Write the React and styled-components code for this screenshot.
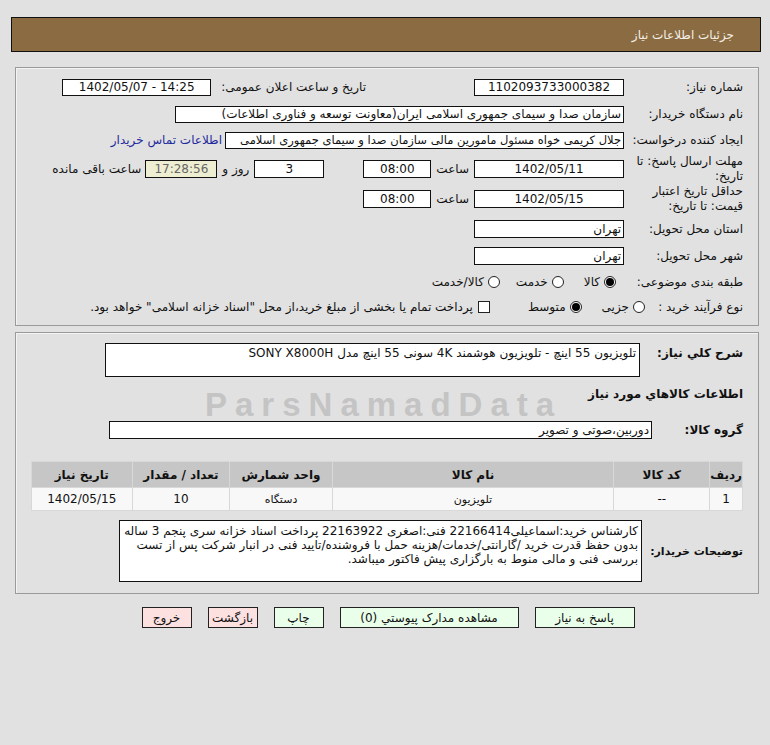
import React from 'react'
import styled, { createGlobalStyle } from 'styled-components'

const GlobalStyle = createGlobalStyle`
  html, body {
    margin: 0;
    padding: 0;
    background: #e1e1e1;
  }
  body {
    font-family: "DejaVu Sans", Tahoma, sans-serif;
    font-size: 11px;
    color: #111;
  }
`

const Page = styled.div`
  direction: rtl;
  width: 750px;
  padding: 17px 0 0 11px;
`

const Header = styled.div`
  height: 33px;
  background: #8b6c42;
  border: 1px solid #111;
  color: #f4efe6;
  font-size: 12px;
  display: flex;
  align-items: center;
  padding-right: 26px;
`

const Body = styled.div`
  position: relative;
  margin: 15px 2px 0 4px;
`

const Watermark = styled.div`
  position: absolute;
  left: 190px;
  top: 319px;
  font-family: "Liberation Sans", Arial, sans-serif;
  font-weight: bold;
  font-size: 33px;
  letter-spacing: 8px;
  color: #c4c4c4;
  white-space: nowrap;
  direction: ltr;
  pointer-events: none;
  z-index: 0;
`

const Panel = styled.div`
  position: relative;
  z-index: 1;
  border: 1px solid #9a9a9a;
  box-shadow: inset 1px 1px 0 #f4f4f4;
  padding: ${p => p.$pad};
  margin-bottom: ${p => p.$mb || 0}px;
  display: flex;
  flex-direction: column;
`

const Row = styled.div`
  display: flex;
  align-items: ${p => p.$top ? 'flex-start' : 'center'};
  height: ${p => p.$h}px;
  margin-top: ${p => p.$mt || 0}px;
`

const Label = styled.div`
  width: ${p => p.$w}px;
  flex-shrink: 0;
  font-size: ${p => p.$fs || 12}px;
  line-height: 15px;
  font-weight: ${p => p.$bold ? 'bold' : 'normal'};
  padding-top: ${p => p.$pt || 0}px;
  white-space: ${p => p.$nowrap ? 'nowrap' : 'normal'};
`

const Text = styled.span`
  white-space: nowrap;
  font-size: 12px;
  margin: 0 ${p => p.$mx || 4}px;
`

const Field = styled.div`
  width: ${p => p.$w}px;
  height: ${p => p.$h || 17}px;
  flex-shrink: 0;
  box-sizing: border-box;
  border: 1px solid #111;
  background: ${p => p.$bg || '#fff'};
  color: ${p => p.$color || '#111'};
  font-size: ${p => p.$fs || 12}px;
  line-height: ${p => (p.$h || 17) - 2}px;
  text-align: ${p => p.$align || 'center'};
  direction: ${p => p.$ltr ? 'ltr' : 'rtl'};
  padding: 0 2px;
  overflow: hidden;
  white-space: nowrap;
`

const Area = styled.div`
  width: ${p => p.$w}px;
  height: ${p => p.$h}px;
  box-sizing: border-box;
  border: 1px solid #111;
  background: #fff;
  font-size: 12px;
  line-height: 14px;
  padding: ${p => p.$pad || '2px 3px'};
`

const Link = styled.a`
  color: #1f2a9e;
  text-decoration: none;
  font-size: 12px;
  white-space: nowrap;
  margin-right: 3px;
`

const Spacer = styled.div`
  width: ${p => p.$w}px;
  flex-shrink: 0;
`

const Option = styled.label`
  display: flex;
  align-items: center;
  font-size: 12px;
  margin-left: ${p => p.$ml || 0}px;
  white-space: nowrap;
`

const Radio = styled.span`
  width: 12px;
  height: 12px;
  box-sizing: border-box;
  border-radius: 50%;
  border: 1px solid #222;
  background: #fff;
  margin-left: 4px;
  display: flex;
  align-items: center;
  justify-content: center;
  &::after {
    content: '';
    width: 8px;
    height: 8px;
    border-radius: 50%;
    background: ${p => p.$on ? '#000' : 'transparent'};
  }
`

const Check = styled.span`
  width: 12px;
  height: 12px;
  box-sizing: border-box;
  border: 1px solid #222;
  background: #fff;
  margin-left: 5px;
`

const Section = styled.div`
  font-size: 12px;
  font-weight: bold;
  margin-top: ${p => p.$mt}px;
  height: 16px;
`

const Table = styled.table`
  width: 712px;
  margin: 22px 0 0 0;
  border-collapse: collapse;
  font-size: 12px;
  align-self: flex-start;
`

const Th = styled.th`
  width: ${p => p.$w}px;
  height: 25px;
  background: #c6c6c6;
  border: 1px solid #d8d8d8;
  font-weight: bold;
  text-align: center;
  padding: 0;
`

const Td = styled.td`
  height: 22px;
  background: #f8f8f8;
  border: 1px solid #d8d8d8;
  text-align: center;
  padding: 0;
  font-size: ${p => p.$fs || 12}px;
`

const Buttons = styled.div`
  display: flex;
  justify-content: center;
  gap: 16px;
  margin-top: 13px;
  padding-left: 4px;
`

const Button = styled.button`
  width: ${p => p.$w}px;
  height: 21px;
  border: 1px solid #222;
  background: ${p => p.$danger ? '#fde0e0' : '#eaffea'};
  font-family: "DejaVu Sans", Tahoma, sans-serif;
  font-size: 12px;
  color: #111;
  padding: 0;
  cursor: pointer;
`

export default function App() {
  return (
    <>
      <GlobalStyle />
      <Page>
        <Header>جزئیات اطلاعات نیاز</Header>
        <Body>
          <Watermark>ParsNamadData</Watermark>

          <Panel $pad="9px 15px 8px 0" $mb={6}>
            <Row $h={20}>
              <Label $w={119}>شماره نیاز:</Label>
              <Field $w={150}>1102093733000382</Field>
              <Spacer $w={104} />
              <Text $mx={0}>تاریخ و ساعت اعلان عمومی:</Text>
              <Spacer $w={6} />
              <Field $w={149} $ltr>1402/05/07 - 14:25</Field>
            </Row>
            <Row $h={20} $mt={7}>
              <Label $w={119}>نام دستگاه خریدار:</Label>
              <Field $w={449} $align="right">سازمان صدا و سیمای جمهوری اسلامی ایران(معاونت توسعه و فناوری اطلاعات)</Field>
            </Row>
            <Row $h={20} $mt={6}>
              <Label $w={119}>ایجاد کننده درخواست:</Label>
              <Field $w={399} $align="right" $fs={11.5}>جلال کریمی خواه مسئول مامورین مالی  سازمان صدا و سیمای جمهوری اسلامی</Field>
              <Link href="#">اطلاعات تماس خریدار</Link>
            </Row>
            <Row $h={30} $mt={4}>
              <Label $w={119}>مهلت ارسال پاسخ: تا تاریخ:</Label>
              <Field $w={150} $h={18}>1402/05/11</Field>
              <Text $mx={5}>ساعت</Text>
              <Field $w={68} $h={18}>08:00</Field>
              <Spacer $w={39} />
              <Field $w={70} $h={18}>3</Field>
              <Text $mx={5}>روز و</Text>
              <Field $w={72} $h={18} $bg="#eeeed2" $color="#666">17:28:56</Field>
              <Text $mx={4}>ساعت باقی مانده</Text>
            </Row>
            <Row $h={30} $mt={0}>
              <Label $w={119}>حداقل تاریخ اعتبار قیمت: تا تاریخ:</Label>
              <Field $w={150} $h={18}>1402/05/15</Field>
              <Text $mx={5}>ساعت</Text>
              <Field $w={68} $h={18}>08:00</Field>
            </Row>
            <Row $h={20} $mt={5}>
              <Label $w={119}>استان محل تحویل:</Label>
              <Field $w={150} $h={18} $align="right">تهران</Field>
            </Row>
            <Row $h={20} $mt={7}>
              <Label $w={119}>شهر محل تحویل:</Label>
              <Field $w={150} $h={18} $align="right">تهران</Field>
            </Row>
            <Row $h={20} $mt={6}>
              <Label $w={127}>طبقه بندی موضوعی:</Label>
              <Option $ml={20}><Radio $on />کالا</Option>
              <Option $ml={16}><Radio />خدمت</Option>
              <Option><Radio />کالا/خدمت</Option>
            </Row>
            <Row $h={20} $mt={5}>
              <Label $w={98}>نوع فرآیند خرید :</Label>
              <Option $ml={20}><Radio />جزیی</Option>
              <Option $ml={38}><Radio $on />متوسط</Option>
              <Option><Check />پرداخت تمام یا بخشی از مبلغ خرید،از محل "اسناد خزانه اسلامی" خواهد بود.</Option>
            </Row>
          </Panel>

          <Panel $pad="10px 15px 11px 0">
            <Row $h={34} $top>
              <Label $w={103} $bold $pt={3}>شرح کلي نیاز:</Label>
              <Area $w={535} $h={34}>تلویزیون 55 اینچ - تلویزیون هوشمند 4K سونی 55 اینچ مدل SONY X8000H</Area>
            </Row>
            <Section $mt={10}>اطلاعات کالاهاي مورد نیاز</Section>
            <Row $h={18} $mt={18}>
              <Label $w={91} $bold>گروه کالا:</Label>
              <Field $w={543} $h={18} $align="right">دوربین،صوتی و تصویر</Field>
            </Row>
            <Table>
              <thead>
                <tr>
                  <Th $w={31}>ردیف</Th>
                  <Th $w={96}>کد کالا</Th>
                  <Th $w={285}>نام کالا</Th>
                  <Th $w={102}>واحد شمارش</Th>
                  <Th $w={98}>تعداد / مقدار</Th>
                  <Th $w={100}>تاریخ نیاز</Th>
                </tr>
              </thead>
              <tbody>
                <tr>
                  <Td>1</Td>
                  <Td>--</Td>
                  <Td $fs={11}>تلویزیون</Td>
                  <Td $fs={11}>دستگاه</Td>
                  <Td>10</Td>
                  <Td>1402/05/15</Td>
                </tr>
              </tbody>
            </Table>
            <Row $h={62} $mt={9}>
              <Label $w={101} $bold $nowrap $fs={11}>توضیحات خریدار:</Label>
              <Area $w={523} $h={62} $pad="3px 3px">
                کارشناس خرید:اسماعیلی22166414 فنی:اصغری 22163922  پرداخت اسناد خزانه سری پنجم 3 ساله بدون حفظ قدرت خرید /گارانتی/خدمات/هزینه حمل با فروشنده/تایید فنی در انبار شرکت پس از تست بررسی فنی و مالی منوط به بارگزاری پیش فاکتور میباشد.
              </Area>
            </Row>
          </Panel>
        </Body>

        <Buttons>
          <Button $w={100}>پاسخ به نیاز</Button>
          <Button $w={179}>مشاهده مدارک پیوستي (0)</Button>
          <Button $w={50}>چاپ</Button>
          <Button $w={50} $danger>بازگشت</Button>
          <Button $w={50} $danger>خروج</Button>
        </Buttons>
      </Page>
    </>
  )
}
